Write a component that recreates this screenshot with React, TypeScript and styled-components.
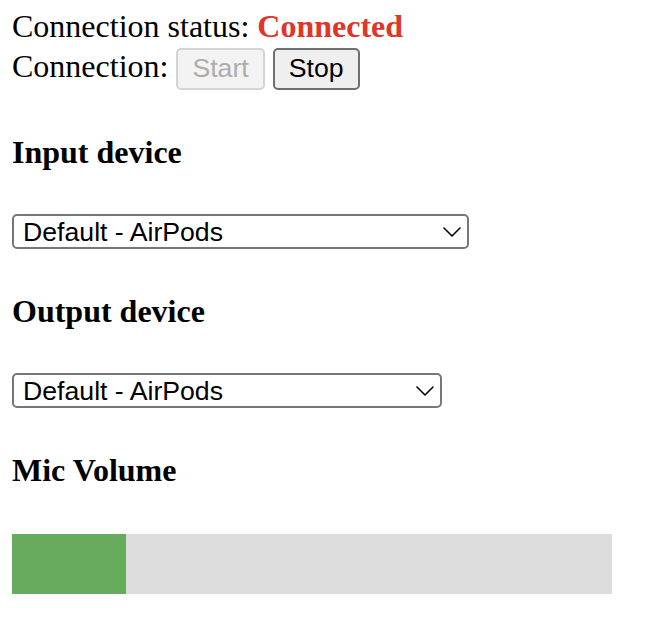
import React, { useState } from 'react';
import styled, { createGlobalStyle } from 'styled-components';

const GlobalStyle = createGlobalStyle`
  html, body {
    margin: 0;
    padding: 0;
    background: #fff;
  }
  body {
    font-family: "Liberation Serif", "Times New Roman", serif;
    color: #000;
  }
`;

interface DeviceSelectProps {
    width: number;
    value: string;
    options: string[];
    onChange: (value: string) => void;
}

const DeviceSelect: React.FC<DeviceSelectProps> = ({ width, value, options, onChange }) => (
    <SelectWrap width={width}>
        <Select value={value} onChange={(e) => onChange(e.target.value)}>
            {options.map((option) => (
                <option key={option} value={option}>
                    {option}
                </option>
            ))}
        </Select>
        <Chevron viewBox="0 0 18 10" width="18" height="10">
            <path d="M1 1 L9 9 L17 1" fill="none" stroke="#000" strokeWidth="1.6" strokeLinecap="round" strokeLinejoin="round" />
        </Chevron>
    </SelectWrap>
);

const App: React.FC = () => {
    const [connected, setConnected] = useState(true);
    const [inputDevice, setInputDevice] = useState('Default - AirPods');
    const [outputDevice, setOutputDevice] = useState('Default - AirPods');
    const micLevel = 19;

    return (
        <Page>
            <GlobalStyle />
            <StatusLine>
                Connection status: <Status connected={connected}>{connected ? 'Connected' : 'Disconnected'}</Status>
            </StatusLine>
            <ConnectionRow>
                <RowLabel>Connection:</RowLabel>
                <Button disabled={connected} onClick={() => setConnected(true)}>Start</Button>
                <Button disabled={!connected} onClick={() => setConnected(false)}>Stop</Button>
            </ConnectionRow>

            <Heading>Input device</Heading>
            <DeviceSelect
                width={457}
                value={inputDevice}
                options={['Default - AirPods', 'AirPods', 'MacBook Pro Microphone']}
                onChange={setInputDevice}
            />

            <Heading>Output device</Heading>
            <DeviceSelect
                width={430}
                value={outputDevice}
                options={['Default - AirPods', 'AirPods', 'MacBook Pro Speakers']}
                onChange={setOutputDevice}
            />

            <Heading>Mic Volume</Heading>
            <Meter>
                <MeterFill style={{ width: `${micLevel}%` }} />
            </Meter>
        </Page>
    );
};

const Page = styled.div`
  display: flex;
  flex-direction: column;
  align-items: flex-start;
  padding: 6px 12px 20px;
`;

const StatusLine = styled.div`
  font-size: 32px;
  line-height: 40px;
`;

const Status = styled.span<{ connected: boolean }>`
  font-weight: bold;
  color: ${(props) => (props.connected ? '#e0362a' : '#000')};
`;

const ConnectionRow = styled.div`
  display: flex;
  align-items: baseline;
  gap: 8px;
`;

const RowLabel = styled.span`
  font-size: 32px;
  line-height: 40px;
`;

const Button = styled.button`
  font-family: "Liberation Sans", Arial, sans-serif;
  font-size: 26.67px;
  line-height: 31px;
  padding: 3px 14px 4px;
  border: 2px solid #6f6f6f;
  border-radius: 5px;
  background: #efefef;
  color: #000;
  cursor: pointer;

  &:disabled {
    border-color: #d4d4d4;
    background: #f3f3f3;
    color: #acacac;
    cursor: default;
  }
`;

const Heading = styled.h4`
  font-size: 32px;
  font-weight: bold;
  line-height: 37px;
  margin: 44px 0 0;
`;

const SelectWrap = styled.div<{ width: number }>`
  position: relative;
  width: ${(props) => props.width}px;
  margin-top: 43px;
`;

const Select = styled.select`
  appearance: none;
  -webkit-appearance: none;
  display: block;
  width: 100%;
  height: 35px;
  box-sizing: border-box;
  padding: 0 34px 0 9px;
  font-family: "Liberation Sans", Arial, sans-serif;
  font-size: 26.67px;
  color: #000;
  background: #fff;
  border: 2px solid #777;
  border-radius: 5px;
  outline: none;
`;

const Chevron = styled.svg`
  position: absolute;
  right: 8px;
  top: 13px;
  pointer-events: none;
`;

const Meter = styled.div`
  width: 600px;
  height: 60px;
  margin-top: 45px;
  background: #dcdcdc;
`;

const MeterFill = styled.div`
  height: 100%;
  background: #66ac5c;
`;

export default App;
